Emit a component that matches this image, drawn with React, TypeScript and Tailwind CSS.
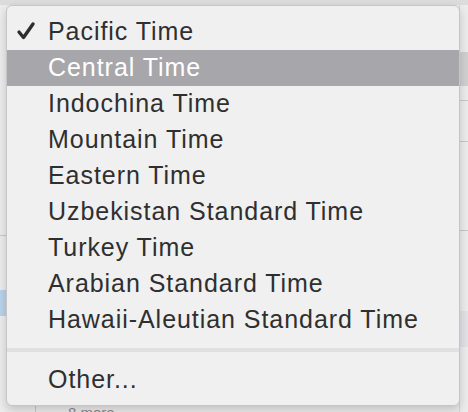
import React from "react";

const zones = [
  "Central Time",
  "Indochina Time",
  "Mountain Time",
  "Eastern Time",
  "Uzbekistan Standard Time",
  "Turkey Time",
  "Arabian Standard Time",
  "Hawaii-Aleutian Standard Time",
];

function Check() {
  return (
    <svg width="20" height="20" viewBox="0 0 20 20" className="block">
      <path d="M3 11 L7.5 16.5 L17 3" fill="none" stroke="#2e2e2e" strokeWidth="3.4" strokeLinecap="round" strokeLinejoin="round" />
    </svg>
  );
}

function Row({ label, checked, active }: { label: string; checked?: boolean; active?: boolean }) {
  return (
    <div className={`flex h-[36px] items-center ${active ? "bg-[#a7a6aa] text-white" : "text-[#2f2f2f]"}`}>
      <div className="flex w-[41px] pl-[9px] pb-[2px]">{checked && <Check />}</div>
      <span className="whitespace-nowrap tracking-[0.95px]">{label}</span>
    </div>
  );
}

// the window that sits behind the popup
function Backdrop() {
  return (
    <div className="flex h-full w-full flex-col bg-[#ececec]">
      <div className="h-[5px] shrink-0 bg-[#dcdcdc]" />
      <div className="flex flex-1">
        <div className="flex w-[6px] flex-col pt-[230px]">
          <div className="h-px bg-[#c8c8c8]" />
          <div className="mt-[54px] h-[26px] bg-[#b9d3ea]" />
        </div>
        <div className="flex flex-1 flex-col justify-end border-r border-[#d6d6d6]">
          <div className="ml-[29px] flex h-[8px] border-l border-[#c8c8c8]">
            <span className="ml-[32px] mt-[1px] text-[15px] leading-[15px] text-[#8a8a8a]">8 more</span>
          </div>
        </div>
        <div className="flex w-[8px] flex-col pt-[47px]">
          <div className="h-[34px] bg-[#d0d0d0]" />
          <div className="mt-[14px] h-px bg-[#c8c8c8]" />
          <div className="mt-[40px] h-px bg-[#c8c8c8]" />
          <div className="mt-[88px] h-px bg-[#c8c8c8]" />
          <div className="mt-[80px] h-[36px] bg-[#e2e2e6]" />
        </div>
      </div>
    </div>
  );
}

export default function App() {
  return (
    <div className="relative h-[412px] w-[468px] overflow-hidden" style={{ fontFamily: '"Liberation Sans", Arial, sans-serif' }}>
      <Backdrop />
      <div className="absolute left-[6px] top-[5px] w-[454px] rounded-[6px] border border-[#c6c6c6] bg-[#f0f0f0] pt-[8px] pb-[7px] text-[25px] shadow-[0_4px_10px_rgba(0,0,0,0.18)]">
        <Row label="Pacific Time" checked />
        {zones.map((z, i) => (
          <Row key={z} label={z} active={i === 0} />
        ))}
        <div className="my-[10px] h-[4px] bg-[#e0e0e0]" />
        <Row label="Other..." />
      </div>
    </div>
  );
}
